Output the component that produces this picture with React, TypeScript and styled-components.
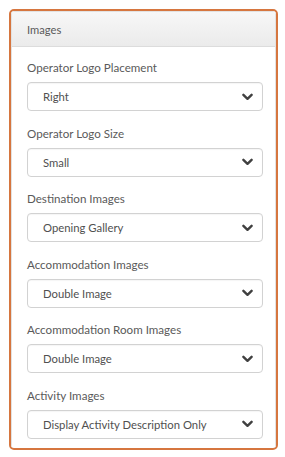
import React from "react";
import styled, { createGlobalStyle } from "styled-components";

const Global = createGlobalStyle`
  html, body { margin: 0; padding: 0; background: #ffffff; }
  body { font-family: Lato, "Open Sans", sans-serif; }
  * { box-sizing: border-box; }
`;

const Page = styled.div`
  padding: 9px 7px 7px 9px;
`;

const Panel = styled.section`
  width: 269px;
  height: 441px;
  border: 2px solid #d6763f;
  border-radius: 5px;
  overflow: hidden;
  display: flex;
  flex-direction: column;
`;

const Inner = styled.div`
  flex: 1;
  border: 1px solid #e2e2e2;
  border-radius: 3px;
  display: flex;
  flex-direction: column;
`;

const Header = styled.div`
  height: 35px;
  display: flex;
  align-items: center;
  padding-left: 15px;
  background: linear-gradient(#f7f7f7, #ebebeb);
  border-bottom: 1px solid #dcdcdc;
  color: #5a5a5a;
  font-size: 11.2px;
`;

const Body = styled.div`
  padding: 13px 12px 10px 15px;
  display: flex;
  flex-direction: column;
  gap: 14.5px;
`;

const Group = styled.div`
  display: flex;
  flex-direction: column;
`;

const Label = styled.label`
  font-size: 11.6px;
  line-height: 16px;
  color: #5a5a5a;
  margin-bottom: 6px;
`;

const Select = styled.div`
  height: 29px;
  border: 1px solid #d2d2d2;
  border-radius: 4px;
  background: #fff;
  box-shadow: inset 0 1px 1px rgba(0, 0, 0, 0.04);
  display: flex;
  align-items: center;
  justify-content: space-between;
  padding: 0 9px 0 15px;
  color: #505050;
  font-size: 11.3px;
`;

const Chevron = () => (
  <svg width="11" height="8" viewBox="0 0 11 8">
    <path d="M1.4 1.8 L5.5 5.8 L9.6 1.8" fill="none" stroke="#404040" strokeWidth="2.4" strokeLinecap="round" strokeLinejoin="round" />
  </svg>
);

const fields: [string, string][] = [
  ["Operator Logo Placement", "Right"],
  ["Operator Logo Size", "Small"],
  ["Destination Images", "Opening Gallery"],
  ["Accommodation Images", "Double Image"],
  ["Accommodation Room Images", "Double Image"],
  ["Activity Images", "Display Activity Description Only"],
];

export default function App() {
  return (
    <>
      <Global />
      <Page>
        <Panel>
          <Inner>
            <Header>Images</Header>
            <Body>
              {fields.map(([label, value]) => (
                <Group key={label}>
                  <Label>{label}</Label>
                  <Select>
                    <span>{value}</span>
                    <Chevron />
                  </Select>
                </Group>
              ))}
            </Body>
          </Inner>
        </Panel>
      </Page>
    </>
  );
}
